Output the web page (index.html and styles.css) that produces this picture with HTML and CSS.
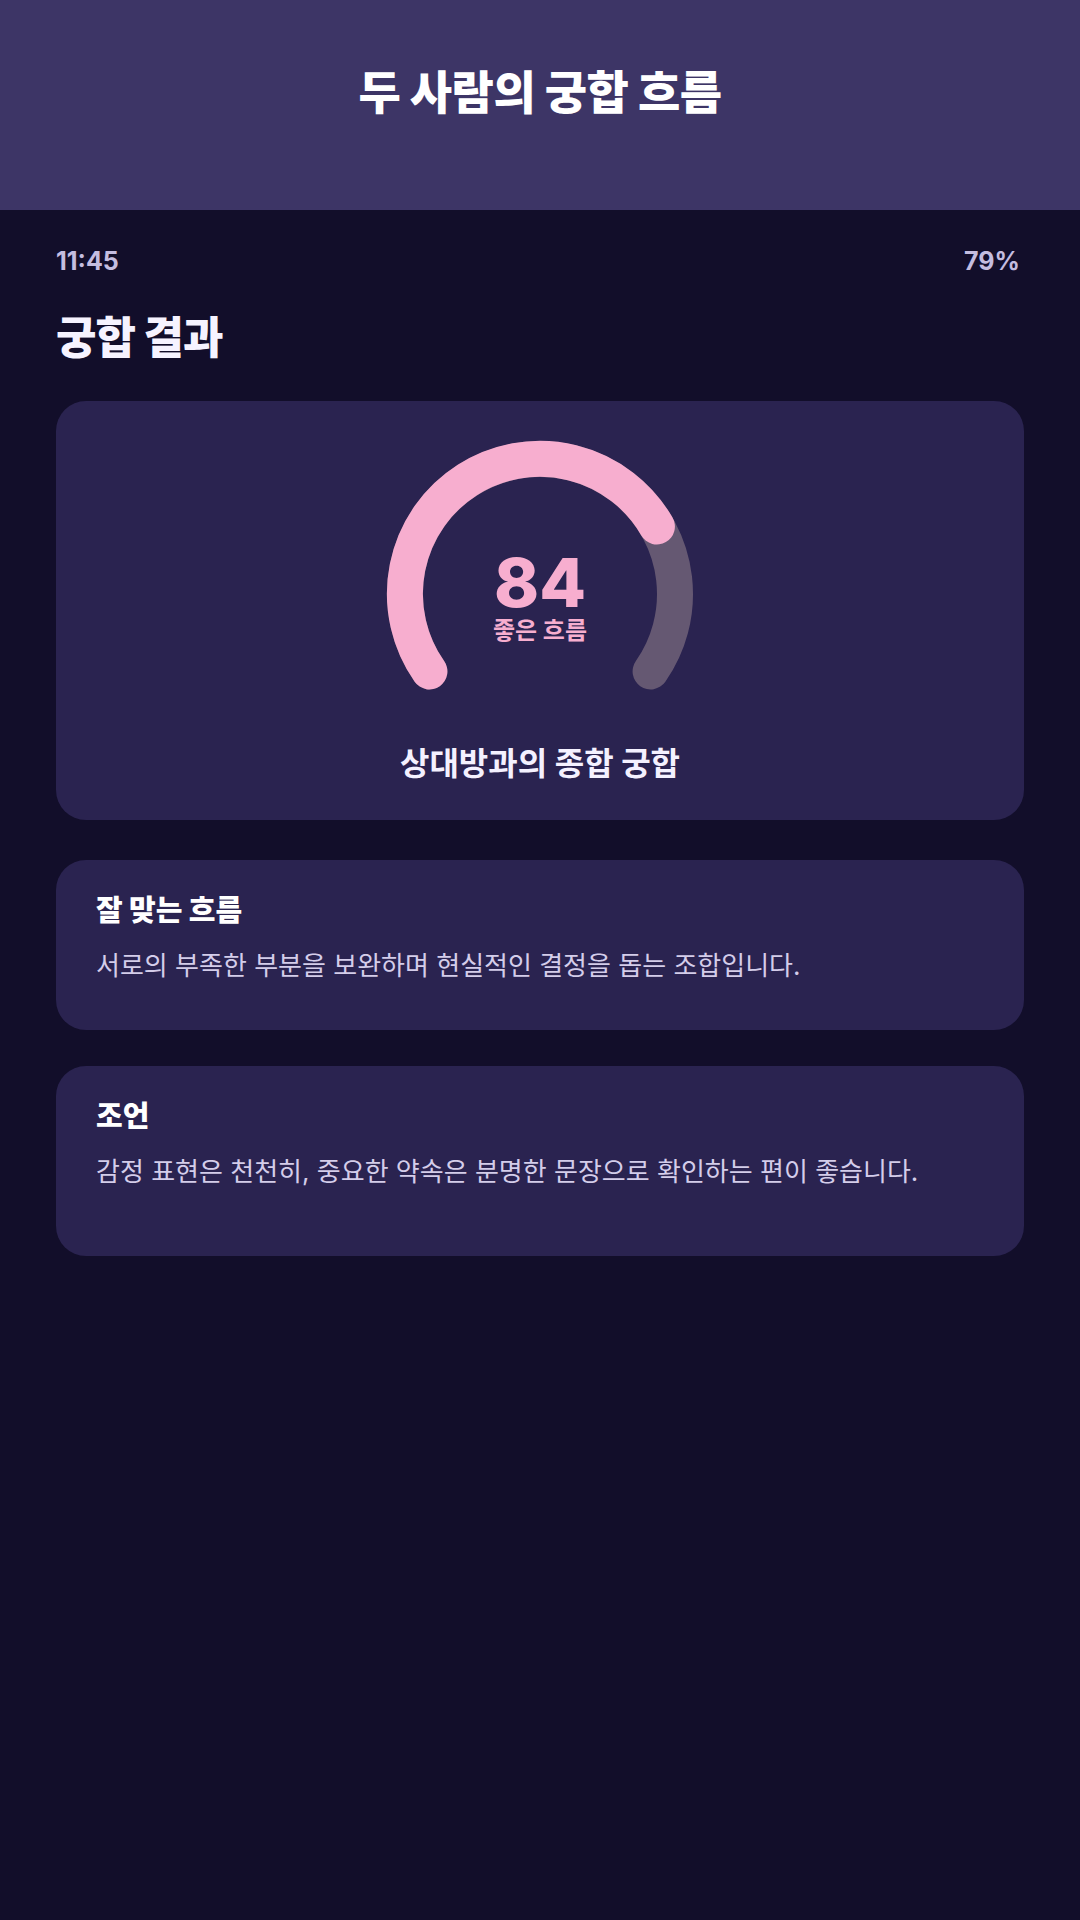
FILE: index.html
```html
<!DOCTYPE html>
<html lang="ko">
  <head>
    <meta charset="UTF-8" />
    <meta name="viewport" content="width=device-width, initial-scale=1.0" />
    <title>궁합 결과</title>
    <link rel="stylesheet" href="styles.css">
  </head>
  <body>
    <header class="app-header">
      <h1 class="app-title">두 사람의 궁합 흐름</h1>
    </header>
    <main class="page">
      <div class="status-bar">
        <span>11:45</span>
        <span>79%</span>
      </div>
      <h2 class="page-title">궁합 결과</h2>

      <section class="card score-card">
        <div class="gauge">
          <svg width="310" height="252" viewBox="0 0 310 252">
            <path class="gauge-track" d="M44.4 232.4 A135 135 0 1 1 265.6 232.4" />
            <path class="gauge-fill" d="M44.4 232.4 A135 135 0 1 1 271.9 87.5" />
          </svg>
          <div class="gauge-label">
            <span class="gauge-score">84</span>
            <span class="gauge-text">좋은 흐름</span>
          </div>
        </div>
        <p class="score-caption">상대방과의 종합 궁합</p>
      </section>

      <section class="card info-card">
        <h3 class="card-title">잘 맞는 흐름</h3>
        <p class="card-text">서로의 부족한 부분을 보완하며 현실적인 결정을 돕는 조합입니다.</p>
      </section>

      <section class="card info-card advice-card">
        <h3 class="card-title">조언</h3>
        <p class="card-text">감정 표현은 천천히, 중요한 약속은 분명한 문장으로 확인하는 편이 좋습니다.</p>
      </section>
    </main>
  </body>
</html>
```
FILE: styles.css
```css
* {
  margin: 0;
  padding: 0;
  box-sizing: border-box;
}

body {
  font-family: Inter, "Noto Sans CJK KR", sans-serif;
  background-color: #120e2a;
  color: #f4f1ff;
  min-height: 1920px;
}

.app-header {
  height: 210px;
  background-color: #3d3566;
  padding-top: 65px;
  text-align: center;
}

.app-title {
  font-size: 46px;
  font-weight: 800;
  line-height: 1.2;
  letter-spacing: -0.5px;
  color: #ffffff;
}

.page {
  padding: 36px 56px 0;
}

.status-bar {
  display: flex;
  justify-content: space-between;
  padding-right: 4px;
  font-size: 25px;
  font-weight: 700;
  color: #c4bde0;
}

.page-title {
  margin-top: 36px;
  font-size: 44px;
  font-weight: 800;
  line-height: 1.2;
  letter-spacing: -1px;
  color: #f6f3ff;
}

.card {
  background-color: #2a2350;
  border-radius: 30px;
  margin-top: 36px;
}

.score-card {
  display: flex;
  flex-direction: column;
  align-items: center;
  padding: 38px 40px 37px;
  margin-bottom: 40px;
}

.score-card + .card {
  margin-top: 0;
}

.gauge {
  position: relative;
  width: 310px;
  height: 252px;
}

.gauge svg {
  display: block;
}

.gauge-track,
.gauge-fill {
  fill: none;
  stroke-width: 36;
  stroke-linecap: round;
}

.gauge-track {
  stroke: #655872;
}

.gauge-fill {
  stroke: #f7aecf;
}

.gauge-label {
  position: absolute;
  top: 113px;
  left: 0;
  right: 0;
  display: flex;
  flex-direction: column;
  align-items: center;
  color: #f7aecf;
}

.gauge-score {
  font-size: 68px;
  font-weight: 800;
  line-height: 0.9;
}

.gauge-text {
  margin-top: 6px;
  font-size: 24px;
  font-weight: 700;
  line-height: 1;
}

.score-caption {
  margin-top: 54px;
  font-size: 32px;
  font-weight: 700;
  line-height: 1.2;
  color: #f4f1ff;
}

.info-card {
  padding: 32px 40px 46px;
}

.advice-card {
  padding-bottom: 66px;
}

.card-title {
  font-size: 29px;
  font-weight: 800;
  line-height: 1.3;
  color: #ffffff;
}

.card-text {
  margin-top: 18px;
  font-size: 26px;
  line-height: 1.4;
  color: #d4cdea;
}
```
